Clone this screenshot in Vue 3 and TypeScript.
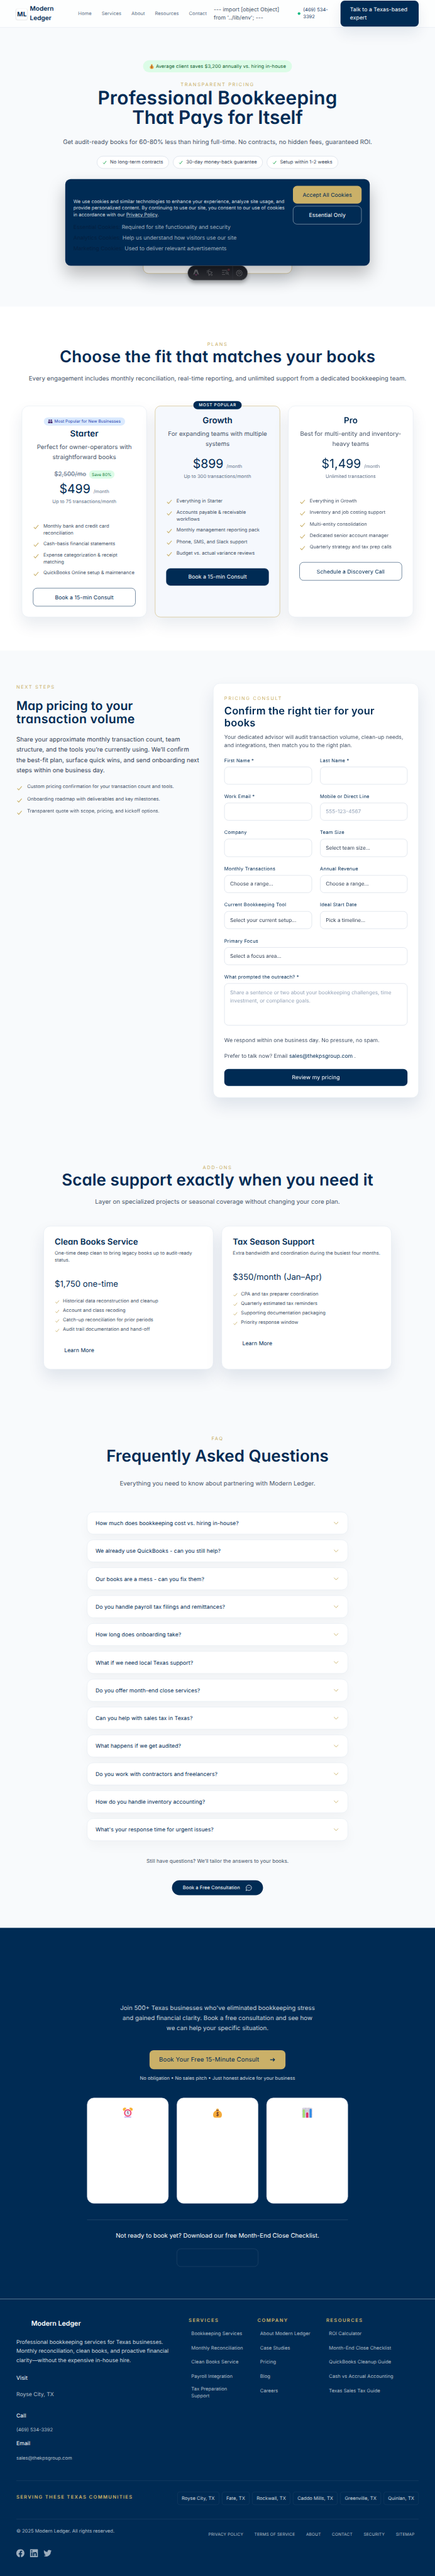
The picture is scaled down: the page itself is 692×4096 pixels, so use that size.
<script setup lang="ts">
interface Plan {
  name: string
  desc: string[]
  price: string
  note: string
  features: string[]
  cta: string
  starter?: boolean
  popular?: boolean
}

const nav = ['Home', 'Services', 'About', 'Resources', 'Contact']
const chips = ['No long-term contracts', '30-day money-back guarantee', 'Setup within 1-2 weeks']

const cookieKinds = [
  { name: 'Essential Cookies:', text: 'Required for site functionality and security' },
  { name: 'Analytics Cookies:', text: 'Help us understand how visitors use our site' },
  { name: 'Marketing Cookies:', text: 'Used to deliver relevant advertisements' },
]

const plans: Plan[] = [
  {
    name: 'Starter',
    desc: ['Perfect for owner-operators with', 'straightforward books'],
    price: '$499',
    note: 'Up to 75 transactions/month',
    features: [
      'Monthly bank and credit card\nreconciliation',
      'Cash-basis financial statements',
      'Expense categorization & receipt\nmatching',
      'QuickBooks Online setup & maintenance',
    ],
    cta: 'Book a 15-min Consult',
    starter: true,
  },
  {
    name: 'Growth',
    desc: ['For expanding teams with multiple', 'systems'],
    price: '$899',
    note: 'Up to 300 transactions/month',
    features: [
      'Everything in Starter',
      'Accounts payable & receivable\nworkflows',
      'Monthly management reporting pack',
      'Phone, SMS, and Slack support',
      'Budget vs. actual variance reviews',
    ],
    cta: 'Book a 15-min Consult',
    popular: true,
  },
  {
    name: 'Pro',
    desc: ['Best for multi-entity and inventory-', 'heavy teams'],
    price: '$1,499',
    note: 'Unlimited transactions',
    features: [
      'Everything in Growth',
      'Inventory and job costing support',
      'Multi-entity consolidation',
      'Dedicated senior account manager',
      'Quarterly strategy and tax prep calls',
    ],
    cta: 'Schedule a Discovery Call',
  },
]

const steps = [
  'Custom pricing confirmation for your transaction count and tools.',
  'Onboarding roadmap with deliverables and key milestones.',
  'Transparent quote with scope, pricing, and kickoff options.',
]

const fields = [
  { label: 'First Name *', value: '' },
  { label: 'Last Name *', value: '' },
  { label: 'Work Email *', value: '' },
  { label: 'Mobile or Direct Line', value: '555-123-4567', hint: true },
  { label: 'Company', value: '' },
  { label: 'Team Size', value: 'Select team size...' },
  { label: 'Monthly Transactions', value: 'Choose a range...' },
  { label: 'Annual Revenue', value: 'Choose a range...' },
  { label: 'Current Bookkeeping Tool', value: 'Select your current setup...' },
  { label: 'Ideal Start Date', value: 'Pick a timeline...' },
  { label: 'Primary Focus', value: 'Select a focus area...', wide: true },
]

const addons = [
  {
    name: 'Clean Books Service',
    desc: 'One-time deep clean to bring legacy books up to audit-ready\nstatus.',
    price: '$1,750 one-time',
    features: [
      'Historical data reconstruction and cleanup',
      'Account and class recoding',
      'Catch-up reconciliation for prior periods',
      'Audit trail documentation and hand-off',
    ],
  },
  {
    name: 'Tax Season Support',
    desc: 'Extra bandwidth and coordination during the busiest four months.',
    price: '$350/month (Jan–Apr)',
    features: [
      'CPA and tax preparer coordination',
      'Quarterly estimated tax reminders',
      'Supporting documentation packaging',
      'Priority response window',
    ],
  },
]

const faqs = [
  'How much does bookkeeping cost vs. hiring in-house?',
  'We already use QuickBooks - can you still help?',
  'Our books are a mess - can you fix them?',
  'Do you handle payroll tax filings and remittances?',
  'How long does onboarding take?',
  'What if we need local Texas support?',
  'Do you offer month-end close services?',
  'Can you help with sales tax in Texas?',
  'What happens if we get audited?',
  'Do you work with contractors and freelancers?',
  'How do you handle inventory accounting?',
  "What's your response time for urgent issues?",
]

const footerCols = [
  {
    title: 'SERVICES',
    links: ['Bookkeeping Services', 'Monthly Reconciliation', 'Clean Books Service', 'Payroll Integration', 'Tax Preparation\nSupport'],
  },
  { title: 'COMPANY', links: ['About Modern Ledger', 'Case Studies', 'Pricing', 'Blog', 'Careers'] },
  {
    title: 'RESOURCES',
    links: ['ROI Calculator', 'Month-End Close Checklist', 'QuickBooks Cleanup Guide', 'Cash vs Accrual Accounting', 'Texas Sales Tax Guide'],
  },
]

const cities = ['Royse City, TX', 'Fate, TX', 'Rockwall, TX', 'Caddo Mills, TX', 'Greenville, TX', 'Quinlan, TX']
const legal = ['PRIVACY POLICY', 'TERMS OF SERVICE', 'ABOUT', 'CONTACT', 'SECURITY', 'SITEMAP']
</script>

<template>
  <div class="viewport">
    <div class="page">
      <header class="header">
        <div class="mark">ML</div>
        <div class="brand">Modern<br />Ledger</div>
        <nav class="nav"><a v-for="n in nav" :key="n">{{ n }}</a></nav>
        <div class="stray">--- import [object Object]<br />from '../lib/env'; ---</div>
        <div class="phone"><i></i><span>(469) 534-<br />3392</span></div>
        <div class="talk">Talk to a Texas-based<br />expert</div>
      </header>

      <section class="hero">
        <div class="saves">
          <svg width="15" height="15" viewBox="0 0 32 32"><path d="M11 2l3 2 2-3 2 3 3-2-1 7h-8z" fill="#f2a93b" /><ellipse cx="16" cy="21" rx="12" ry="11" fill="#f0a03a" /><path d="M12 8h8v4h-8z" fill="#7d4a33" /><path d="M19 17c-4-3-8 2-3 4s2 6-3 3M16 14v13" fill="none" stroke="#6b3d2c" stroke-width="2" /></svg>
          Average client saves $3,200 annually vs. hiring in-house
        </div>
        <p class="eyebrow e-hero">TRANSPARENT PRICING</p>
        <h1><span class="l1">Professional Bookkeeping</span><br /><span class="l2">That Pays for Itself</span></h1>
        <p class="lead hero-lead">Get audit-ready books for 60-80% less than hiring full-time. No contracts, no hidden fees, guaranteed ROI.</p>
        <div class="chips">
          <span v-for="c in chips" :key="c">
            <svg width="12" height="12" viewBox="0 0 12 12"><path d="M1.2 6.6 4.4 10 10.8 1.6" fill="none" stroke="#16a34a" stroke-width="1.7" /></svg>{{ c }}
          </span>
        </div>
        <div class="guarantee"></div>
      </section>

      <div class="cookie">
        <div class="cookie-text">
          <p>We use cookies and similar technologies to enhance your experience, analyze site usage, and<br />provide personalized content. By continuing to use our site, you consent to our use of cookies<br />in accordance with our <u>Privacy Policy</u>.</p>
          <div v-for="k in cookieKinds" :key="k.name" class="kind"><b>{{ k.name }}</b> {{ k.text }}</div>
        </div>
        <div class="cookie-actions">
          <span class="accept">Accept All Cookies</span>
          <span class="essential">Essential Only</span>
        </div>
      </div>

      <div class="toolbar">
        <svg width="175" height="41" viewBox="0 0 175 41">
          <path d="M20.5 11.5h7l5 14.500-4-1.200-4.500-9-4.500 9-4 1.200z" fill="#56575b" />
          <path d="M20 24.500h8l-4 6z" fill="#59304f" />
          <g fill="none" stroke="#56575b" stroke-width="1.800" stroke-linejoin="round" stroke-linecap="round">
            <path d="M59.500 14.500 72 19.500l-4.500 2.500 4.500 5-2.500 2-4.500-5-2.500 4.500z" />
            <path d="M60.500 12v-.6M64 11.500l.4-1M56.500 15.500l-.8-.2M56.800 19.500l-.8.6" />
            <path d="M101 13.500h14M101 19.500h6M101 25.500h8" />
            <circle cx="115" cy="21" r="3.200" /><path d="m117.500 23.500 2.500 3" />
            <circle cx="151" cy="20.500" r="3.400" />
            <path d="M151 12.500l2.300 2.200 3.200-.5.600 3.200 2.700 1.600-1.400 2.900 1.400 2.900-2.900 1.100-.5 3.100-3.200-.3-2.200 2.100-2.200-2.100-3.200.3-.5-3.100-2.900-1.100 1.400-2.900-1.400-2.900 2.700-1.600.6-3.200 3.200.5z" />
          </g>
          <circle cx="120" cy="11.500" r="3.500" fill="#4a2733" />
          <path d="M131.500 0v41" stroke="#343841" />
        </svg>
      </div>

      <section class="plans">
        <p class="eyebrow">PLANS</p>
        <h2 class="big choose">Choose the fit that matches your books</h2>
        <p class="lead">Every engagement includes monthly reconciliation, real-time reporting, and unlimited support from a dedicated bookkeeping team.</p>
        <div class="plan-grid">
          <article v-for="p in plans" :key="p.name" class="plan" :class="{ popular: p.popular, starter: p.starter }">
            <span v-if="p.popular" class="ribbon">MOST POPULAR</span>
            <span v-if="p.starter" class="tag">
              <svg width="14" height="14" viewBox="0 0 14 14" fill="#4b2f73"><circle cx="4" cy="3.500" r="2.300" /><circle cx="10" cy="3.500" r="2.300" /><path d="M.5 6.500h6v6h-6zM7.500 6.500h6v6h-6z" /></svg>
              Most Popular for New Businesses
            </span>
            <h3>{{ p.name }}</h3>
            <p class="plan-desc">{{ p.desc[0] }}<br />{{ p.desc[1] }}</p>
            <div v-if="p.starter" class="was"><s>$2,500/mo</s><span>Save 80%</span></div>
            <div class="price">{{ p.price }} <small>/month</small></div>
            <p class="note">{{ p.note }}</p>
            <ul class="features">
              <li v-for="f in p.features" :key="f">
                <svg width="20" height="20" viewBox="0 0 20 20"><path d="M2.500 10.800 7 15.500 16.200 5" /></svg><span>{{ f }}</span>
              </li>
            </ul>
            <div class="cta">{{ p.cta }}</div>
          </article>
        </div>
      </section>

      <section class="consult">
        <div class="left">
          <p class="eyebrow">NEXT STEPS</p>
          <h2><span class="m1">Map pricing to your</span><br /><span class="m2">transaction volume</span></h2>
          <p class="share">Share your approximate monthly transaction count, team<br />structure, and the tools you’re currently using. We’ll confirm<br />the best-fit plan, surface quick wins, and send onboarding next<br />steps within one business day.</p>
          <ul class="steps">
            <li v-for="s in steps" :key="s"><svg width="20" height="20" viewBox="0 0 20 20"><path d="M3 10.500 7.200 15 16 4.800" /></svg><span>{{ s }}</span></li>
          </ul>
        </div>
        <form class="form">
          <p class="eyebrow">PRICING CONSULT</p>
          <h3>Confirm the right tier for your<br />books</h3>
          <p class="form-desc">Your dedicated advisor will audit transaction volume, clean-up needs,<br />and integrations, then match you to the right plan.</p>
          <div class="fields">
            <label v-for="f in fields" :key="f.label" :class="{ wide: f.wide }">
              <span>{{ f.label }}</span>
              <div class="input" :class="{ hint: f.hint }">{{ f.value }}</div>
            </label>
            <label class="wide">
              <span>What prompted the outreach? *</span>
              <div class="input area">Share a sentence or two about your bookkeeping challenges, time<br />investment, or compliance goals.</div>
            </label>
          </div>
          <p class="respond">We respond within one business day. No pressure, no spam.</p>
          <p class="prefer">Prefer to talk now? Email <b>sales@thekpsgroup.com</b> .</p>
          <div class="submit">Review my pricing</div>
        </form>
      </section>

      <section class="addons">
        <p class="eyebrow">ADD-ONS</p>
        <h2 class="big scale">Scale support exactly when you need it</h2>
        <p class="lead">Layer on specialized projects or seasonal coverage without changing your core plan.</p>
        <div class="addon-grid">
          <article v-for="a in addons" :key="a.name">
            <h3>{{ a.name }}</h3>
            <p class="addon-desc">{{ a.desc }}</p>
            <div class="addon-price">{{ a.price }}</div>
            <ul>
              <li v-for="f in a.features" :key="f"><svg width="16" height="16" viewBox="0 0 16 16"><path d="M2.400 8.800 5.800 12.500 12.800 4.200" /></svg><span>{{ f }}</span></li>
            </ul>
            <div class="learn">Learn More</div>
          </article>
        </div>
      </section>

      <section class="faq">
        <p class="eyebrow">FAQ</p>
        <h2 class="big">Frequently Asked Questions</h2>
        <p class="lead">Everything you need to know about partnering with Modern Ledger.</p>
        <div class="questions">
          <div v-for="q in faqs" :key="q" class="q">
            <span>{{ q }}</span>
            <svg width="20" height="20" viewBox="0 0 20 20"><path d="M3.800 6.800 10 13.200 16.200 6.800" fill="none" stroke="#cab068" stroke-width="1.700" /></svg>
          </div>
        </div>
        <p class="still">Still have questions? We’ll tailor the answers to your books.</p>
        <div class="free">
          Book a Free Consultation
          <svg width="20" height="20" viewBox="0 0 24 24" fill="none" stroke="#fff" stroke-width="1.800" stroke-linecap="round" stroke-linejoin="round"><path d="M2.500 21.500 4 17a9.500 9.500 0 1 1 3.500 3.500z" /><path d="M8 12h.01M12 12h.01M16 12h.01" /></svg>
        </div>
      </section>

      <section class="join">
        <p class="join-text">Join 500+ Texas businesses who've eliminated bookkeeping stress<br />and gained financial clarity. Book a free consultation and see how<br />we can help your specific situation.</p>
        <div class="join-btn">
          Book Your Free 15-Minute Consult
          <svg width="20" height="20" viewBox="0 0 20 20"><path d="M3 10h13M11.500 5.500 16 10l-4.500 4.500" fill="none" stroke="#002b54" stroke-width="2.200" /></svg>
        </div>
        <p class="obligation">No obligation • No sales pitch • Just honest advice for your business</p>
        <div class="tiles">
          <div>
            <svg width="32" height="30" viewBox="0 0 32 30"><path d="M3 9a5 5 0 0 1 9-7L6 9zM29 9a5 5 0 0 0-9-7l6 7z" fill="#f9b233" /><path d="M6 26h20v4H6z" fill="#cdb4ef" /><circle cx="16" cy="15.500" r="11" fill="#f4436c" /><circle cx="16" cy="15.500" r="7.800" fill="#e9e6f3" /><path d="M16 10v6l1.800 3" fill="none" stroke="#4a3a5c" stroke-width="1.800" /></svg>
          </div>
          <div>
            <svg width="32" height="30" viewBox="0 0 32 30"><path d="M11.500 3.500l3 .5L16 1l1.500 3 3-.5L19 7h-6z" fill="#f5b544" /><path d="M12.500 8h7C25 10.500 29 15 29 21c0 6-3 9-6 9H9c-3 0-6-3-6-9 0-6 4-10.500 9.500-13z" fill="#f5ab3b" /><path d="M12.500 6.500h7v2.500h-7z" fill="#7d4533" /><path d="M19.500 15.500c-3-3-8 .5-3.500 3s4 6.500-3.500 3.500M16 12v14" fill="none" stroke="#6f3b2d" stroke-width="2" /></svg>
          </div>
          <div>
            <svg width="32" height="30" viewBox="0 0 32 30"><path d="M5 0h22a4 4 0 0 1 4 4v26H1V4a4 4 0 0 1 4-4z" fill="#d6d0df" /><path d="M1 10h30M1 20h30M11 0v30M21 0v30" stroke="#bdb6c9" /><path d="M3 8a3 3 0 0 1 6 0v22H3z" fill="#9fe070" /><path d="M13 17a3 3 0 0 1 6 0v13h-6z" fill="#e22a63" /><path d="M23 6a3 3 0 0 1 6 0v24h-6z" fill="#2d8be6" /></svg>
          </div>
        </div>
        <div class="rule"></div>
        <p class="ready">Not ready to book yet? Download our free Month-End Close Checklist.</p>
        <div class="ghost"></div>
      </section>

      <footer class="footer">
        <div class="foot-top">
          <div class="about">
            <div class="foot-brand">Modern Ledger</div>
            <p class="blurb">Professional bookkeeping services for Texas businesses.<br />Monthly reconciliation, clean books, and proactive financial<br />clarity—without the expensive in-house hire.</p>
            <div class="h visit">Visit</div>
            <div class="v city">Royse City, TX</div>
            <div class="h call">Call</div>
            <div class="v tel">(469) 534-3392</div>
            <div class="h email">Email</div>
            <div class="v mail">sales@thekpsgroup.com</div>
          </div>
          <div v-for="c in footerCols" :key="c.title" class="col">
            <div class="gold">{{ c.title }}</div>
            <a v-for="l in c.links" :key="l" :class="{ two: l.includes('\n') }">{{ l }}</a>
          </div>
        </div>
        <div class="serving">
          <div class="gold">SERVING THESE TEXAS COMMUNITIES</div>
          <div class="cities"><span v-for="c in cities" :key="c">{{ c }}</span></div>
        </div>
        <div class="legal">
          <div>
            <div class="copy">© 2025 Modern Ledger. All rights reserved.</div>
            <div class="social">
              <svg width="24" height="24" viewBox="0 0 24 24"><path d="M24 12.070C24 5.400 18.630 0 12 0S0 5.400 0 12.070C0 18.100 4.390 23.100 10.130 24v-8.440H7.080v-3.490h3.050V9.410c0-3.020 1.790-4.690 4.530-4.690 1.310 0 2.680.240 2.680.240v2.970h-1.510c-1.490 0-1.960.930-1.960 1.890v2.250h3.330l-.530 3.490h-2.800V24C19.610 23.100 24 18.100 24 12.070z" /></svg>
              <svg width="24" height="24" viewBox="0 0 24 24"><path d="M20.450 20.450h-3.560v-5.570c0-1.330-.02-3.040-1.850-3.040-1.850 0-2.130 1.450-2.130 2.940v5.670H9.350V9h3.410v1.560h.05c.48-.9 1.640-1.850 3.370-1.850 3.600 0 4.270 2.370 4.270 5.460v6.280zM5.340 7.430a2.060 2.060 0 1 1 0-4.130 2.060 2.060 0 0 1 0 4.130zm1.780 13.020H3.560V9h3.560v11.450zM22.220 0H1.770C.79 0 0 .77 0 1.730v20.540C0 23.230.79 24 1.770 24h20.450c.98 0 1.780-.77 1.780-1.730V1.730C24 .77 23.200 0 22.220 0z" /></svg>
              <svg width="24" height="24" viewBox="0 0 24 24"><path d="M23.950 4.570a10 10 0 0 1-2.820.770 4.960 4.960 0 0 0 2.160-2.720c-.95.550-2 .960-3.130 1.180a4.920 4.920 0 0 0-8.380 4.480C7.690 8.090 4.070 6.130 1.640 3.160a4.820 4.820 0 0 0-.67 2.480c0 1.710.87 3.210 2.190 4.100a4.900 4.900 0 0 1-2.230-.62v.06a4.920 4.920 0 0 0 3.950 4.830 5 5 0 0 1-2.210.080 4.940 4.940 0 0 0 4.600 3.420A9.870 9.870 0 0 1 0 19.540a13.990 13.990 0 0 0 7.550 2.210c9.050 0 14-7.500 14-13.980 0-.21 0-.42-.02-.63a9.940 9.940 0 0 0 2.460-2.550z" /></svg>
            </div>
          </div>
          <nav><a v-for="l in legal" :key="l">{{ l }}</a></nav>
        </div>
      </footer>
    </div>
  </div>
</template>

<style>
html,
body {
  margin: 0;
  background: #002b54;
}
</style>

<style scoped>
.viewport {
  width: 692px;
  height: 4096px;
  overflow: hidden;
}
.page {
  position: relative;
  width: 1280px;
  height: 7579px;
  transform: scale(0.540625, 0.54044);
  transform-origin: 0 0;
  background: #f8fafc;
  font-family: Inter, 'Liberation Sans', sans-serif;
  font-size: 16px;
  line-height: 24px;
  color: #475569;
  text-rendering: geometricPrecision;
  white-space: nowrap;
}
.page *,
.page {
  box-sizing: border-box;
}
p,
h1,
h2,
h3,
ul {
  margin: 0;
  padding: 0;
  list-style: none;
}
svg {
  flex: none;
  display: block;
}
h1,
h2,
h3,
.brand,
.foot-brand {
  font-weight: 600;
  color: #002b54;
  font-feature-settings: 'cv11';
}
.eyebrow {
  font-size: 14px;
  line-height: 20px;
  letter-spacing: 2.900px;
  color: #cab068;
}
.big {
  font-size: 48px;
  line-height: 56px;
}
.lead {
  font-size: 18px;
  line-height: 30px;
}

/* header */
.header {
  position: relative;
  height: 81px;
  border-bottom: 1px solid #e2e8f0;
  background: #fdfefe;
  display: flex;
  align-items: center;
  padding-left: 48px;
}
.mark {
  width: 32px;
  height: 32px;
  border-radius: 6px;
  background: #fff;
  box-shadow: 0 1px 3px rgba(0, 0, 0, 0.12);
  font: 700 19px/32px 'Noto Sans', sans-serif;
  letter-spacing: -0.3px;
  text-align: center;
  color: #002b54;
  margin-top: 4px;
}
.brand {
  width: 142px;
  padding-left: 8px;
  font-size: 18.600px;
  line-height: 28px;
}
.nav {
  display: flex;
  gap: 29.500px;
  width: 400px;
  padding-left: 8px;
  font-size: 14px;
  letter-spacing: 0.080px;
  color: #64748b;
}
.stray {
  width: 246px;
  padding-left: 7px;
  color: #475569;
}
.phone {
  display: flex;
  align-items: center;
  gap: 8px;
  width: 134px;
  padding-left: 8px;
  font-size: 14px;
  line-height: 20px;
  color: #1e4368;
}
.phone i {
  width: 8px;
  height: 8px;
  border-radius: 50%;
  background: #10b981;
}
.talk {
  width: 230px;
  height: 76px;
  margin-top: -1px;
  padding: 14px 28px;
  border-radius: 12px;
  background: #002b54;
  color: #fff;
  letter-spacing: 0.140px;
  box-shadow: 0 20px 40px rgba(0, 43, 84, 0.09);
}

/* hero */
.hero {
  height: 821px;
  display: flex;
  flex-direction: column;
  align-items: center;
  padding-top: 96px;
}
.saves {
  width: 438px;
  height: 36px;
  border-radius: 18px;
  background: #dcfce7;
  color: #166534;
  font-size: 14px;
  letter-spacing: 0.160px;
  display: flex;
  align-items: center;
  justify-content: center;
  gap: 5px;
}
.e-hero {
  margin-top: 27px;
}
h1 {
  font-size: 55px;
  line-height: 57.700px;
  text-align: center;
}
.l1 {
  letter-spacing: 0.5px;
}
.l2 {
  letter-spacing: -0.2px;
}
.hero-lead {
  margin-top: 28.500px;
}
.chips {
  display: flex;
  gap: 12px;
  margin-top: 25px;
}
.chips span {
  height: 37.500px;
  padding: 0 16px;
  display: flex;
  align-items: center;
  gap: 10px;
  border: 1px solid #cbd5e1;
  border-radius: 19px;
  background: #fff;
  color: #334155;
  font-size: 14px;
  letter-spacing: 0.080px;
}
.guarantee {
  width: 438px;
  height: 262px;
  margin-top: 47px;
  border: 1px solid #cab068;
  border-radius: 16px;
  background: #fff;
  box-shadow: 0 20px 45px rgba(15, 23, 42, 0.16);
}
.cookie {
  position: absolute;
  left: 192px;
  top: 526.500px;
  width: 896px;
  height: 255.500px;
  border-radius: 16px;
  background: #002b54;
  box-shadow: 0 25px 50px rgba(0, 0, 0, 0.25);
  display: flex;
  padding: 20.500px 24px;
}
.cookie-text {
  width: 646px;
  padding-top: 36px;
  color: rgba(255, 255, 255, 0.82);
}
.cookie-text p {
  font-size: 14px;
  line-height: 20.200px;
  margin-bottom: 12px;
}
.kind {
  height: 31px;
  line-height: 25.600px;
  color: rgba(255, 255, 255, 0.62);
}
.kind b {
  font-weight: 400;
  color: #041f40;
}
.cookie-actions {
  width: 202px;
}
.cookie-actions span {
  display: block;
  text-align: center;
  border-radius: 12px;
  letter-spacing: 0.120px;
}
.accept {
  height: 51.500px;
  line-height: 53px;
  background: #cab068;
  color: #002b54;
}
.essential {
  height: 54px;
  margin-top: 7.500px;
  line-height: 52px;
  border: 1px solid rgba(255, 255, 255, 0.75);
  color: #fff;
}
.toolbar {
  position: absolute;
  left: 552.500px;
  top: 782.300px;
  width: 175px;
  height: 41.400px;
  border-radius: 21px;
  background: linear-gradient(#13151b, #2d2e33);
  box-shadow: 0 0 0 1px rgba(52, 56, 65, 0.6), 0 8px 12px rgba(0, 0, 0, 0.3);
}

/* plans */
.plans {
  height: 1012px;
  padding: 101px 64px 0;
  background: #fff;
  text-align: center;
}
.choose {
  letter-spacing: 0.340px;
  margin-top: -2px;
}
.plans .lead {
  margin-top: 22px;
}
.plan-grid {
  display: grid;
  grid-template-columns: repeat(3, 368px);
  gap: 24px;
  margin-top: 64.500px;
}
.plan {
  position: relative;
  height: 622.500px;
  padding: 28.500px 32px 0;
  border: 1px solid #e2e8f0;
  border-radius: 20px;
  background: #fff;
  box-shadow: 0 22px 45px rgba(0, 43, 84, 0.09);
}
.popular {
  border-color: #cab068;
  border-radius: 16px;
  background: #f5f8fd;
}
.ribbon {
  position: absolute;
  left: 112px;
  top: -14.500px;
  width: 142px;
  height: 24px;
  line-height: 24px;
  border-radius: 12px;
  background: #002b54;
  color: #fff;
  font-size: 12px;
  font-weight: 500;
  letter-spacing: 1.250px;
}
.tag {
  display: flex;
  align-items: center;
  justify-content: center;
  gap: 5px;
  width: 239px;
  height: 24px;
  margin: 5px auto 10px;
  border-radius: 12px;
  background: #dbeafe;
  color: #1e40af;
  font-size: 12px;
  letter-spacing: 0.130px;
}
.plan h3 {
  font-size: 24.800px;
  line-height: 28px;
}
.plan-desc {
  margin-top: 13px;
  font-size: 18px;
  line-height: 28.400px;
}
.was {
  display: flex;
  justify-content: center;
  align-items: center;
  gap: 8px;
  height: 24px;
  margin-top: 24px;
  margin-bottom: -12.500px;
  font-size: 18px;
  color: #64748b;
}
.was span {
  width: 75px;
  height: 24px;
  line-height: 24px;
  border-radius: 12px;
  background: #dcfce7;
  color: #15803d;
  font-size: 12px;
}
.price {
  margin-top: 22.500px;
  height: 40px;
  line-height: 40px;
  font-size: 36px;
  color: #002b54;
}
.price small {
  font-size: 13.800px;
  color: #64748b;
  margin-left: -1px;
}
.note {
  margin-top: 8.500px;
  font-size: 14px;
  line-height: 20px;
  color: #64748b;
}
.features {
  margin-top: 52px;
  margin-bottom: 32px;
  display: grid;
  gap: 12px;
  text-align: left;
  font-size: 14px;
  line-height: 20px;
}
.features li,
.steps li {
  display: flex;
  gap: 10.500px;
}
.features span {
  white-space: pre;
}
.features svg {
  margin-top: 2px;
}
.features path,
.steps path,
.addons path {
  fill: none;
  stroke: #cab068;
  stroke-width: 2;
}
.addons path {
  stroke-width: 1.600;
}
.cta {
  height: 54px;
  line-height: 52px;
  border: 1.500px solid #002b54;
  border-radius: 12px;
  color: #002b54;
  letter-spacing: 0.120px;
}
.popular .cta {
  height: 51px;
  line-height: 49px;
  background: #002b54;
  color: #fff;
}

/* consult */
.consult {
  position: relative;
  height: 1411px;
  padding: 96px 48px 0;
  display: flex;
  justify-content: space-between;
}
.left {
  padding-top: 3px;
}
.left h2 {
  margin-top: 23.500px;
  font-size: 36px;
  line-height: 39.700px;
}
.m1 {
  letter-spacing: 0.160px;
}
.m2 {
  letter-spacing: 0.700px;
}
.share {
  margin-top: 25.500px;
  font-size: 18px;
  line-height: 30.200px;
  color: #334155;
}
.steps {
  margin-top: 23px;
  font-size: 14px;
  line-height: 20px;
}
.steps li {
  height: 36px;
  gap: 12px;
}
.steps svg {
  margin-top: 4px;
}
.form {
  width: 605px;
  height: 1219.500px;
  padding: 35px 32px 0;
  border: 1px solid #e2e8f0;
  border-radius: 20px;
  background: #fff;
  box-shadow: 0 24px 48px rgba(0, 43, 84, 0.1);
}
.form h3 {
  margin-top: 7.500px;
  font-size: 30.500px;
  line-height: 36px;
  letter-spacing: 0.330px;
}
.form-desc {
  margin-top: 10px;
}
.fields {
  display: grid;
  grid-template-columns: 1fr 1fr;
  gap: 26px 24px;
  margin-top: 24.500px;
}
label {
  display: block;
}
label > span {
  display: block;
  font-size: 14px;
  line-height: 20px;
  letter-spacing: 0.410px;
  color: #002b54;
}
.wide {
  grid-column: 1 / 3;
}
.input {
  height: 52.200px;
  margin-top: 8px;
  padding: 0 16px;
  line-height: 50px;
  border: 1px solid #cbd5e1;
  border-radius: 12px;
  font-size: 15.200px;
  color: #334155;
}
.hint,
.area {
  color: #94a3b8;
}
.area {
  height: 124px;
  padding-top: 14px;
  line-height: 24.300px;
}
.respond {
  margin-top: 31px;
}
.prefer {
  margin-top: 23px;
}
.prefer b {
  font-weight: 400;
  color: #002b54;
}
.submit {
  height: 50.500px;
  margin-top: 25.500px;
  line-height: 51px;
  border-radius: 12px;
  background: #002b54;
  color: #fff;
  letter-spacing: 0.160px;
  text-align: center;
}

/* add-ons */
.addons {
  height: 798px;
  padding: 100px 128px 0;
  text-align: center;
}
.scale {
  margin-top: -2.500px;
  letter-spacing: 0.080px;
}
.addons .lead {
  margin-top: 22.500px;
}
.addon-grid {
  display: grid;
  grid-template-columns: 500px 500px;
  gap: 24px;
  margin-top: 56px;
  text-align: left;
}
.addon-grid article {
  height: 422px;
  padding: 28.700px 32px 0;
  border: 1px solid #e2e8f0;
  border-radius: 20px;
  background: #fff;
  box-shadow: 0 24px 48px rgba(0, 43, 84, 0.1);
}
.addon-grid h3 {
  font-size: 24.500px;
  line-height: 30px;
}
.addon-desc {
  margin-top: 11px;
  font-size: 14px;
  line-height: 20.400px;
  white-space: pre;
}
.addon-price {
  margin-top: 42.400px;
  font-size: 24.400px;
  line-height: 32px;
  color: #002b54;
}
.addon-grid ul {
  margin-top: 25px;
  font-size: 14px;
  line-height: 20px;
}
.addon-grid li {
  display: flex;
  gap: 8px;
  height: 28px;
}
.addon-grid li svg {
  margin-top: 4px;
}
.learn {
  margin: 30.500px 0 0 28px;
  color: #002b54;
  letter-spacing: 0.120px;
}

/* faq */
.faq {
  height: 1549px;
  padding: 100px 256px 0;
  display: flex;
  flex-direction: column;
  align-items: center;
}
.faq .big {
  margin-top: 12px;
}
.faq .lead {
  margin-top: 38.500px;
}
.questions {
  margin-top: 68.500px;
  width: 768px;
}
.q {
  height: 65.500px;
  margin-bottom: 16.530px;
  padding: 0 24px;
  display: flex;
  align-items: center;
  justify-content: space-between;
  border: 1px solid #e2e8f0;
  border-radius: 18px;
  background: #fff;
  color: #002b54;
  letter-spacing: 0.120px;
  box-shadow: 0 16px 32px rgba(15, 23, 42, 0.03);
}
.still {
  margin-top: 31px;
  font-size: 15px;
}
.free {
  width: 268px;
  height: 44px;
  margin-top: 45px;
  border-radius: 22px;
  background: #002b54;
  color: #fff;
  font-size: 14px;
  letter-spacing: 0.100px;
  display: flex;
  align-items: center;
  justify-content: center;
  gap: 16px;
}

/* join */
.join {
  height: 1092px;
  padding-top: 221.500px;
  background: #002b54;
  color: rgba(255, 255, 255, 0.8);
  display: flex;
  flex-direction: column;
  align-items: center;
  text-align: center;
}
.join-text {
  font-size: 18px;
  line-height: 29.700px;
}
.join-btn {
  width: 400px;
  height: 56px;
  margin-top: 49.500px;
  padding: 0 28px;
  border-radius: 12px;
  background: #cab068;
  color: #002b54;
  font-size: 18px;
  letter-spacing: 0.150px;
  display: flex;
  align-items: center;
  justify-content: space-between;
}
.obligation {
  margin-top: 15px;
  font-size: 14px;
}
.tiles {
  display: grid;
  grid-template-columns: repeat(3, 240px);
  gap: 24px;
  margin-top: 44.500px;
}
.tiles div {
  height: 311.500px;
  padding-top: 28px;
  border: 1px solid #cfd8e3;
  border-radius: 20px;
  background: #fff;
}
.tiles svg {
  margin: 0 auto;
}
.rule {
  width: 768px;
  height: 2px;
  margin-top: 47px;
  background: rgba(255, 255, 255, 0.1);
}
.ready {
  margin-top: 34.500px;
  font-size: 18px;
  color: #fff;
}
.ghost {
  width: 240px;
  height: 53px;
  margin-top: 25.500px;
  border: 1px solid rgba(255, 255, 255, 0.16);
  border-radius: 12px;
}

/* footer */
.footer {
  height: 816px;
  padding: 0 48px;
  border-top: 1px solid rgba(255, 255, 255, 0.28);
  background: #002b54;
  color: rgba(255, 255, 255, 0.68);
}
.foot-top {
  display: flex;
  height: 534px;
  border-bottom: 1px solid rgba(255, 255, 255, 0.12);
}
.about {
  width: 507px;
  padding-top: 57px;
}
.foot-brand {
  padding-left: 44px;
  font-size: 19.700px;
  line-height: 28px;
  color: #fff;
}
.blurb {
  margin-top: 27px;
  line-height: 27px;
  color: rgba(255, 255, 255, 0.8);
}
.h {
  color: #fff;
  letter-spacing: 0.150px;
}
.visit {
  margin-top: 25px;
}
.city {
  margin-top: 23.500px;
}
.call {
  margin-top: 39px;
}
.tel,
.mail {
  margin-top: 19px;
  font-size: 14px;
}
.email {
  margin-top: 16px;
}
.gold {
  font-size: 14px;
  line-height: 20px;
  font-weight: 600;
  letter-spacing: 2.450px;
  color: #cab068;
}
.col {
  width: 202.500px;
  padding-top: 52.500px;
}
.col .gold {
  margin-bottom: 11px;
  letter-spacing: 2.600px;
}
.col a {
  display: block;
  height: 34px;
  margin-bottom: 8px;
  padding-left: 8px;
  line-height: 34px;
  font-size: 14px;
  white-space: pre;
  letter-spacing: 0.100px;
}
.col a.two {
  padding-top: 2px;
  line-height: 20px;
}
.serving {
  height: 113px;
  padding-top: 32px;
  display: flex;
  justify-content: space-between;
  border-bottom: 1px solid rgba(255, 255, 255, 0.12);
}
.serving .gold {
  margin-top: 6px;
}
.cities {
  display: flex;
  gap: 8px;
}
.cities span {
  height: 39px;
  padding: 0 12px;
  line-height: 38px;
  border: 1px solid rgba(255, 255, 255, 0.1);
  border-radius: 8px;
  font-size: 14px;
  letter-spacing: 0.050px;
  color: rgba(255, 255, 255, 0.8);
}
.legal {
  display: flex;
  justify-content: space-between;
  padding-top: 23px;
}
.copy {
  font-size: 14px;
}
.social {
  display: flex;
  gap: 16px;
  margin-top: 41px;
  fill: rgba(255, 255, 255, 0.62);
}
.legal nav {
  display: flex;
  gap: 32.500px;
  padding: 9px 12px 0 0;
  font-size: 12px;
  letter-spacing: 0.350px;
}
</style>
